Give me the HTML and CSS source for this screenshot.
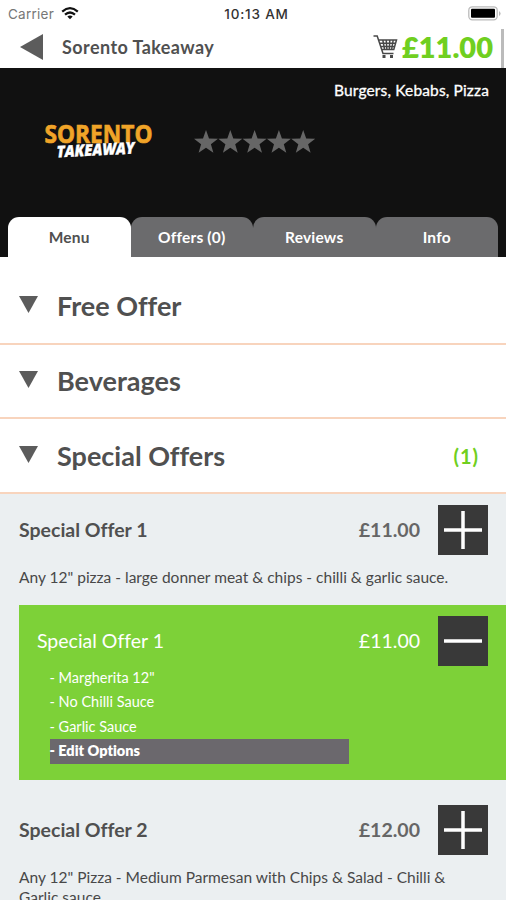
FILE: index.html
```html
<!DOCTYPE html>
<html lang="en">
<head>
<meta charset="utf-8">
<title>Sorento Takeaway</title>
<link rel="stylesheet" href="styles.css">
</head>
<body>
<div class="statusbar">
  <div class="carrier"><span>Carrier</span>
    <svg width="18" height="13" viewBox="0 0 18 13" fill="none" stroke="#111" stroke-width="2.2"><path d="M1.2 4.6Q9-2.2 16.8 4.6M4 7.7Q9 3.3 14 7.7"/><path d="M6.3 9.5Q9 7.4 11.7 9.5L9 12.3Z" fill="#111" stroke="none"/></svg>
  </div>
  <span class="clock">10:13 AM</span>
  <svg class="battery" width="33" height="15" viewBox="0 0 33 15"><rect x=".8" y=".8" width="28.4" height="13" rx="3.5" fill="#fff" stroke="#bbb" stroke-width="1.3"/><rect x="3" y="2.8" width="24" height="9" rx="1" fill="#000"/><path d="M31 5v5q1.6-1 1.6-2.5T31 5" fill="#bbb"/></svg>
</div>
<header class="nav">
  <svg class="back" width="23" height="26" viewBox="0 0 23 26"><path d="M0 13 23 0v26Z" fill="#5c5c5c"/></svg>
  <h1>Sorento Takeaway</h1>
  <svg class="cart" width="25" height="24" viewBox="0 0 25 24" fill="none" stroke="#484848" stroke-width="1.5"><path d="M.5 1H4.2L10 18.5H20.5M5.5 5H23.5L20.8 14.5H8.7M6.6 8.2H22.5M7.7 11.4H21.7M9.8 5l1.8 9.5M13.2 5l.7 9.5M16.8 5l-.5 9.5M20.2 5l-1.6 9.5" /><path d="M9.5 20h3v3h-3zM17 20h3v3h-3z" fill="#484848" stroke="none"/></svg>
  <span class="total">£11.00</span>
  <i class="edge"></i>
</header>
<section class="hero">
  <p class="cuisine">Burgers, Kebabs, Pizza</p>
  <div class="brand">
    <svg class="logo" width="112" height="40" viewBox="0 0 112 40">
      <text class="logo-top" x="1.5" y="22" textLength="108" lengthAdjust="spacingAndGlyphs">SORENTO</text>
      <text class="logo-bottom" x="14" y="36.5" textLength="78" lengthAdjust="spacingAndGlyphs" transform="rotate(-3 14 36.5)">TAKEAWAY</text>
    </svg>
    <svg class="stars" width="122" height="24" viewBox="0 0 122 24" fill="#666"><defs><path id="star" d="m12 0 3 8.4 9 .3-7.1 5.5 2.5 8.6L12 17.7l-7.4 5.1 2.5-8.6L0 8.7l9-.3Z"/></defs><use href="#star"/><use href="#star" x="24.3"/><use href="#star" x="48.6"/><use href="#star" x="72.9"/><use href="#star" x="97.2"/></svg>
  </div>
  <nav class="tabs"><a class="tab active">Menu</a><a class="tab">Offers (0)</a><a class="tab">Reviews</a><a class="tab">Info</a></nav>
</section>
<main>
  <div class="category first"><svg width="19" height="17" viewBox="0 0 19 17"><path d="M0 0h19L9.5 17Z"/></svg><h2>Free Offer</h2></div>
  <div class="category"><svg width="19" height="17" viewBox="0 0 19 17"><path d="M0 0h19L9.5 17Z"/></svg><h2>Beverages</h2></div>
  <div class="category"><svg width="19" height="17" viewBox="0 0 19 17"><path d="M0 0h19L9.5 17Z"/></svg><h2>Special Offers</h2><span class="count">(1)</span></div>
  <section class="items">
    <article class="item">
      <div class="line"><h3>Special Offer 1</h3><span class="price">£11.00</span><button class="btn"><svg width="50" height="50" viewBox="0 0 50 50"><path d="M6 25H44M25 6V44"/></svg></button></div>
      <p class="desc">Any 12" pizza - large donner meat &amp; chips - chilli &amp; garlic sauce.</p>
    </article>
    <article class="selected">
      <div class="line"><h3>Special Offer 1</h3><span class="price">£11.00</span><button class="btn"><svg width="50" height="50" viewBox="0 0 50 50"><path d="M6 25H44"/></svg></button></div>
      <ul><li>- Margherita 12"</li><li>- No Chilli Sauce</li><li>- Garlic Sauce</li><li class="edit">- Edit Options</li></ul>
    </article>
    <article class="item second">
      <div class="line"><h3>Special Offer 2</h3><span class="price">£12.00</span><button class="btn"><svg width="50" height="50" viewBox="0 0 50 50"><path d="M6 25H44M25 6V44"/></svg></button></div>
      <p class="desc">Any 12" Pizza - Medium Parmesan with Chips &amp; Salad - Chilli &amp;<br>Garlic sauce.</p>
    </article>
  </section>
</main>
</body>
</html>
```

FILE: styles.css
```css
* { box-sizing: border-box; }
html, body { height: 900px; overflow: hidden; }
body { margin: 0; width: 506px; background: #fff; color: #505050; font-family: Lato, "Liberation Sans", sans-serif; font-variant-ligatures: none; }
h1, h2, h3, p, ul { margin: 0; padding: 0; list-style: none; }
svg { display: block; flex: none; }

.statusbar { height: 27px; display: grid; grid-template-columns: 1fr auto 1fr; align-items: center; padding: 0 5px 0 8px; font-family: Inter, sans-serif; }
.carrier { display: flex; align-items: center; gap: 7px; font-size: 13.5px; letter-spacing: .25px; color: #777; }
.clock { margin-left: 4px; font-size: 13.5px; letter-spacing: .8px; font-weight: 500; color: #333; }
.battery { justify-self: end; }

.nav { position: relative; height: 41px; display: flex; align-items: center; padding: 0 13px 0 20px; }
.back { margin-top: -1px; }
.nav h1 { margin: -2px 0 0 19px; font-size: 18px; line-height: 22px; letter-spacing: .42px; font-weight: 700; white-space: nowrap; }
.cart { margin: -1px 0 0 auto; }
.total { margin: -1px 0 0 4px; font-size: 29px; line-height: 36px; font-weight: 800; color: #70cf20; }
.edge { position: absolute; right: 2px; top: 2px; width: 3px; height: 39px; background: #bbb; }

.hero { height: 189px; background: #111; display: flex; flex-direction: column; }
.cuisine { padding: 12px 17px 0 0; text-align: right; font-size: 15.5px; line-height: 20px; letter-spacing: .15px; color: #fff; -webkit-text-stroke: .3px #fff; }
.brand { display: flex; align-items: flex-start; padding: 21px 0 0 43px; }
.stars { margin: 9px 0 0 39px; }
.logo { overflow: visible; }
.logo-top { font: 700 25.5px "Open Sans", sans-serif; fill: #f0a428; stroke: #f0a428; stroke-width: .7px; }
.logo-bottom { font: italic 800 16px "Open Sans", sans-serif; fill: #fff; stroke: #fff; stroke-width: .4px; }
.tabs { display: flex; margin: auto 8px 0; height: 40px; }
.tab { flex: 1; display: flex; align-items: center; justify-content: center; border-radius: 11px 11px 0 0; background: #6b6b6d; color: #fff; font-size: 15.5px; letter-spacing: .2px; font-weight: 700; }
.tab.active { background: #fff; color: #505050; }

.category { display: flex; align-items: center; height: 74.6px; padding: 0 27px 0 19px; border-bottom: 2.5px solid #f8d4bd; }
.category.first { height: 87.7px; padding-top: 13px; }
.category svg { margin-top: -3px; fill: #5c5c5c; }
.category h2 { margin-left: 19px; font-size: 27px; line-height: 34px; font-weight: 700; white-space: nowrap; }
.count { margin-left: auto; font-size: 20px; font-weight: 700; color: #70cf20; letter-spacing: 1px; }

.items { height: 410px; background: #ebeff1; }
.item { height: 111px; padding: 11px 18px 0 19px; }
.line { display: flex; align-items: center; height: 50px; }
.line h3 { font-size: 19.5px; line-height: 26px; font-weight: 700; }
.price { margin-left: auto; margin-right: 18px; font-size: 19.5px; font-weight: 700; color: #666; }
.btn { width: 50px; height: 50px; padding: 0; border: 0; background: #393939; }
.btn path { stroke: #fff; stroke-width: 3.5; }
.desc { margin-top: 12px; font-size: 15.5px; line-height: 20px; white-space: nowrap; color: #484848; }
.selected { height: 175px; margin-left: 19px; padding: 11px 18px 0; background: #7dd138; color: #fff; }
.selected h3, .selected .price { font-weight: 400; color: #fff; }
.selected ul { width: 299px; margin: 0 0 0 12.5px; font-size: 14.5px; line-height: 24.5px; }
.edit { background: #6b686d; font-weight: 800; }
.item.second { padding-top: 25px; }
```
